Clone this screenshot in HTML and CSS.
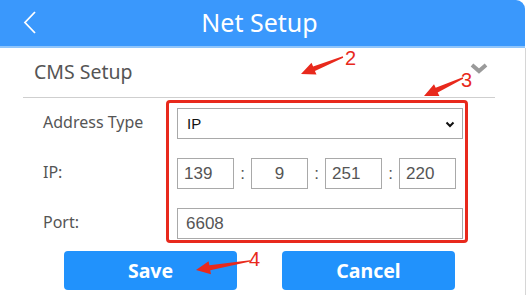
FILE: index.html
```html
<!DOCTYPE html>
<html>
<head>
<meta charset="utf-8">
<link rel="stylesheet" href="styles.css">
</head>
<body>
<div class="app">
  <header class="topbar">
    <div class="back">
      <svg width="14" height="24" viewBox="0 0 14 24"><polyline points="12,1 2,11.5 12,22" fill="none" stroke="#fff" stroke-width="1.8"/></svg>
    </div>
    <h1 class="title">Net Setup</h1>
    <div class="spacer"></div>
  </header>
  <main class="content">
    <div class="section-head">
      <span class="section-title">CMS Setup</span>
      <svg class="collapse" width="18" height="12" viewBox="0 0 18 12"><polyline points="2,2 9,8 16,2" fill="none" stroke="#9a9a9a" stroke-width="4"/></svg>
    </div>
    <div class="form">
      <div class="row">
        <label class="label">Address Type</label>
        <div class="select-wrap">
          <select class="field select"><option>IP</option></select>
          <svg class="select-arrow" width="10" height="7" viewBox="0 0 10 7"><polyline points="1.5,1.5 5,5 8.5,1.5" fill="none" stroke="#111" stroke-width="2"/></svg>
        </div>
      </div>
      <div class="row">
        <label class="label">IP:</label>
        <div class="ip">
          <input class="field octet" value="139">
          <span class="colon">:</span>
          <input class="field octet center" value="9">
          <span class="colon">:</span>
          <input class="field octet" value="251">
          <span class="colon">:</span>
          <input class="field octet" value="220">
        </div>
      </div>
      <div class="row">
        <label class="label">Port:</label>
        <input class="field port" value="6608">
      </div>
    </div>
    <div class="actions">
      <button class="btn">Save</button>
      <button class="btn">Cancel</button>
    </div>
  </main>
  <div class="redbox"></div>
  <svg class="annot" width="526" height="295" viewBox="0 0 526 295">
    <polygon fill="#e8291c" points="342.8,56.3 313.1,66.4 311.5,62.8 301,74 316.5,74.6 314.9,71.1 343.2,57.7"/>
    <polygon fill="#e8291c" points="462.8,77.3 435.7,87.8 434,84.3 424,96 439.4,95.9 437.7,92.4 463.2,78.7"/>
    <polygon fill="#e8291c" points="250,260.2 209.4,265.2 208.6,261.2 196,270 211,274.2 210.2,270.2 250.2,261.6"/>
    <text x="345" y="65" class="num">2</text>
    <text x="461" y="87" class="num">3</text>
    <text x="249" y="266" class="num">4</text>
  </svg>
</div>
</body>
</html>
```
FILE: styles.css
```css
* { box-sizing: border-box; }
html, body { margin: 0; padding: 0; background: #fff; }
body { width: 526px; height: 295px; overflow: hidden; font-family: "Noto Sans", "Open Sans", sans-serif; }
.app { position: relative; width: 526px; height: 295px; }
.topbar {
  height: 48px;
  background: #3a98fc;
  border-bottom: 2px solid #8fc5fb;
  border-top-right-radius: 9px;
  margin-right: 1px;
  display: grid;
  grid-template-columns: 60px 1fr 66px;
  align-items: center;
}
.back { padding-left: 23px; display: flex; align-items: center; height: 24px; margin-top: -1px; }
.title {
  margin: 0; text-align: center; color: #fff;
  font-weight: 400; font-size: 25px; line-height: 30px;
  margin-top: -2px;
}
.content {
  border-right: 1px solid #d6d6d6;
  height: 247px;
  display: flex; flex-direction: column;
}
.section-head {
  margin: 0 30px 0 23px;
  height: 50px;
  border-bottom: 1px solid #cfcfcf;
  display: flex; align-items: center; justify-content: space-between;
  padding-left: 11px; padding-right: 7px;
}
.section-title { font-size: 19.5px; color: #555; margin-top: -2px; }
.collapse { margin-top: -7px; }
.form { padding-top: 10px; display: flex; flex-direction: column; gap: 19px; }
.row { display: flex; align-items: center; height: 31px; padding-left: 43px; }
.label { width: 134px; flex: none; font-size: 16px; color: #555; margin-top: -4px; }
.field {
  height: 31px; border: 1px solid #a9a9a9; background: #fff; border-radius: 0;
  font-family: "Liberation Sans", Arial, sans-serif; color: #555; outline: none;
}
.select-wrap { position: relative; width: 286px; height: 31px; flex: none; }
.select {
  width: 100%; appearance: none; -webkit-appearance: none;
  font-size: 15px; color: #111; padding: 0 0 0 9px;
}
.select-arrow { position: absolute; right: 8px; top: 13px; }
.ip { display: flex; align-items: center; flex: none; }
.octet { width: 57px; flex: none; font-size: 17px; padding: 0 0 0 6px; }
.octet.center { text-align: center; padding: 0; }
.colon { width: 17px; flex: none; text-align: center; font-family: "Liberation Sans", Arial, sans-serif; font-size: 17px; color: #555; }
.port { width: 286px; flex: none; font-size: 17px; padding: 0 0 0 8px; }
.actions { display: flex; gap: 45px; padding-left: 64px; margin-top: 12px; }
.btn {
  width: 173px; height: 39px; border: none; border-radius: 4px;
  background: #2192fc; color: #fff;
  font-family: "Noto Sans", "Open Sans", sans-serif; font-weight: 700; font-size: 19.5px;
  padding: 0;
}
.redbox {
  position: absolute; left: 166px; top: 100px; width: 302px; height: 143px;
  border: 3px solid #e8291c; border-radius: 4px; pointer-events: none;
}
.annot { position: absolute; left: 0; top: 0; pointer-events: none; }
.num { font-family: "Liberation Sans", Arial, sans-serif; font-size: 20px; fill: #e8291c; }
```
